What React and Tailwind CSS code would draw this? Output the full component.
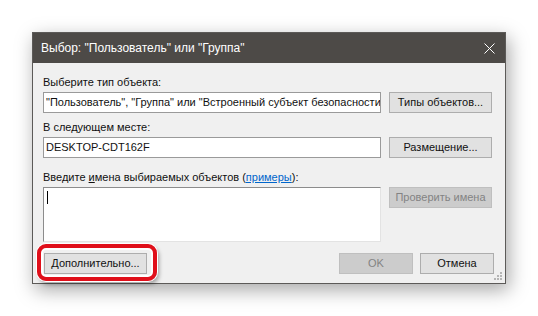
export default function App() {
  const title = { fontFamily: '"Liberation Sans", Arial, sans-serif' };
  const ui = { fontFamily: '"Liberation Sans", Arial, sans-serif' };

  return (
    <div className="w-[538px] h-[316px] bg-white pl-[32px] pt-[32px]" style={ui}>
      <div className="w-[474px] h-[252px] border border-[#5c5a58] bg-[#f0f0f0] shadow-[3px_6px_18px_rgba(0,0,0,0.35)] flex flex-col">
        {/* заголовок */}
        <div
          className="h-[30px] bg-[#4d4a47] flex items-center justify-between pl-[8px] pr-[10px] text-white text-[12px]"
          style={title}
        >
          <span>Выбор: "Пользователь" или "Группа"</span>
          <svg width="11" height="11" viewBox="0 0 11 11">
            <path d="M0.5 0.5L10.5 10.5M10.5 0.5L0.5 10.5" stroke="#fff" strokeWidth="1" />
          </svg>
        </div>

        <div className="relative flex-1 pl-[10px] pr-[11px] pt-[12px] text-[11px] text-[#111]">
          <div className="leading-[15px] mb-[2px]">Выберите тип объекта:</div>
          <div className="flex gap-[8px] h-[21px]">
            <div className="w-[338px] border border-[#9a9a9a] bg-white pl-[2px] leading-[19px] overflow-hidden whitespace-nowrap">
              "Пользователь", "Группа" или "Встроенный субъект безопасности"
            </div>
            <button className="w-[103px] border border-[#adadad] bg-[#e1e1e1] leading-[19px] whitespace-nowrap">
              Типы объектов...
            </button>
          </div>

          <div className="leading-[15px] mt-[7px] mb-[2px]">В следующем месте:</div>
          <div className="flex gap-[8px] h-[21px]">
            <div className="w-[338px] border border-[#9a9a9a] bg-white pl-[2px] leading-[19px]">
              DESKTOP-CDT162F
            </div>
            <button className="w-[103px] border border-[#adadad] bg-[#e1e1e1] leading-[19px] whitespace-nowrap">
              Размещение...
            </button>
          </div>

          <div className="leading-[15px] mt-[12px] mb-[2px]">
            Введите <span className="underline">и</span>мена выбираемых объектов (
            <span className="text-[#0066cc] underline">примеры</span>):
          </div>
          <div className="flex gap-[8px] items-start">
            <div className="w-[338px] h-[55px] border border-t-[#8c8c8c] border-l-[#8c8c8c] border-r-[#e3e3e3] border-b-[#e3e3e3] bg-white pl-[3px] pt-[3px]">
              <div className="w-[1px] h-[13px] bg-black" />
            </div>
            <button className="w-[103px] h-[21px] border border-[#bfbfbf] bg-[#cccccc] text-[#838383] leading-[19px] whitespace-nowrap">
              Проверить имена
            </button>
          </div>

          <div className="flex mt-[11px] h-[21px]">
            <div className="relative ml-[1px]">
              <button className="w-[103px] h-[21px] border border-[#adadad] bg-[#e1e1e1] leading-[19px] whitespace-nowrap">
                Дополнительно...
              </button>
              <div className="absolute left-[-7px] top-[-9px] w-[120px] h-[37px] rounded-[9px] border-[4px] border-[#e0101b] shadow-[0_0_0_1px_#ffffff,inset_0_0_0_2px_#ffffff,2px_3px_4px_rgba(0,0,0,0.35)]" />
            </div>
            <div className="flex-1" />
            <button className="w-[74px] h-[21px] border border-[#bfbfbf] bg-[#cccccc] text-[#838383] leading-[19px] mr-[7px]">
              OK
            </button>
            <button className="w-[74px] h-[21px] border border-[#adadad] bg-[#e1e1e1] leading-[19px]">
              Отмена
            </button>
          </div>

          {/* уголок для изменения размера */}
          <svg className="absolute right-[2px] bottom-[2px]" width="10" height="10" viewBox="0 0 10 10">
            <g fill="#b5b5b5">
              <rect x="7" y="1" width="2" height="2" />
              <rect x="4" y="4" width="2" height="2" />
              <rect x="7" y="4" width="2" height="2" />
              <rect x="1" y="7" width="2" height="2" />
              <rect x="4" y="7" width="2" height="2" />
              <rect x="7" y="7" width="2" height="2" />
            </g>
          </svg>
        </div>
      </div>
    </div>
  );
}
